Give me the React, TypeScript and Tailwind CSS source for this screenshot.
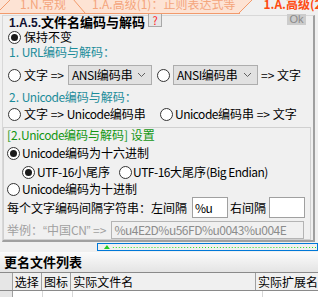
import React from "react";

const L = ({ children }: { children: React.ReactNode }) => (
  <span className="tracking-[-0.5px]">{children}</span>
);

const Radio = ({ checked }: { checked?: boolean }) => (
  <span className="w-[13px] h-[13px] rounded-full border border-[#333333] bg-white flex items-center justify-center shrink-0">
    {checked && <span className="w-[7px] h-[7px] rounded-full bg-[#1a1a1a]" />}
  </span>
);

const Select = ({ w }: { w: string }) => (
  <span className={`${w} h-[20px] bg-[#e1e1e1] border border-[#adadad] flex items-center justify-between pl-[3px] pr-[5px] shrink-0`}>
    <span><L>ANSI</L>编码串</span>
    <svg width="9" height="6" viewBox="0 0 9 6">
      <path d="M1 1 L4.5 4.5 L8 1" fill="none" stroke="#606060" strokeWidth="1" />
    </svg>
  </span>
);

export default function App() {
  return (
    <div className="w-[318px] h-[297px] bg-[#f0f0f0] overflow-hidden text-[12px] leading-[14px] text-black font-['Noto_Sans_CJK_SC','Liberation_Sans',sans-serif]">
      {/* Tabs */}
      <div className="relative h-[14px] bg-[#fde3d4] overflow-hidden">
        <svg className="absolute inset-0" width="318" height="14" viewBox="0 0 318 14">
          <polygon points="239,14 252,0 318,0 318,14" fill="#f0f0f0" />
          <line x1="-3" y1="13" x2="11" y2="-1" stroke="#f29a6c" strokeWidth="1" />
          <line x1="73" y1="-1" x2="85" y2="13" stroke="#f29a6c" strokeWidth="1" />
          <line x1="239" y1="13" x2="253" y2="-1" stroke="#f29a6c" strokeWidth="1" />
          <line x1="0" y1="13.5" x2="240" y2="13.5" stroke="#f29a6c" strokeWidth="1" />
        </svg>
        <div className="relative flex items-start -mt-[3px] leading-[14px] whitespace-nowrap">
          <span className="ml-[20px] text-[#f4a57c]">1.N.常规</span>
          <span className="ml-[26px] text-[#f4a57c]">1.A.高级(1)：正则表达式等</span>
          <span className="ml-[28px] text-[#ff4a10] font-bold">1.A.高级(2)</span>
        </div>
      </div>

      {/* Outer panel */}
      <div className="ml-[2px] mt-[1px] w-[313px] h-[227px] border-t border-l border-[#d8d8d8] border-r-2 border-r-[#a0a0a0] border-b-2 border-b-[#a0a0a0] flex flex-col">
        <div className="h-[14px] flex items-start pl-[6px] whitespace-nowrap">
          <span className="font-bold text-[13px] leading-[14px] mt-[-1px]">
            <span className="text-[12px] font-['Liberation_Sans',sans-serif] text-[#101030]">1.A.5.</span>文件名编码与解码
          </span>
          <span className="ml-[3px] mt-[-3px] w-[14px] h-[14px] bg-[#e6e6e6] border border-[#a8a8a8] flex items-center justify-center text-[#ff2020] text-[11px] leading-[12px]">?</span>
          <span className="ml-auto mr-[7px] mt-[-4px] w-[19px] h-[13px] bg-[#cccccc] flex items-center justify-center text-[#8a8a8a] text-[11px] leading-[12px] font-['Liberation_Sans',sans-serif]">Ok</span>
        </div>
        <div className="h-[14px] flex items-center pl-[5px] gap-[3px]">
          <Radio checked />
          <span>保持不变</span>
        </div>
        <div className="h-[16px] flex items-center pl-[6px] text-[#1c8c9a] whitespace-pre">
          <span>1. <L>URL</L>编码与解码：</span>
        </div>
        <div className="mt-[4px] h-[22px] flex items-center pl-[5px] whitespace-nowrap">
          <Radio />
          <span className="ml-[3px]">文字 =&gt;</span>
          <span className="ml-[4px]"><Select w="w-[84px]" /></span>
          <span className="ml-[5px]"><Radio /></span>
          <span className="ml-[3px]"><Select w="w-[85px]" /></span>
          <span className="ml-[3px]">=&gt; 文字</span>
        </div>
        <div className="h-[21px] flex items-center pl-[6px] text-[#1c8c9a] whitespace-pre">
          <span>2. <L>Unicode</L>编码与解码：</span>
        </div>
        <div className="h-[14px] flex items-center pl-[5px] whitespace-nowrap">
          <Radio />
          <span className="ml-[3px] w-[136px]">文字 =&gt; <L>Unicode</L>编码串</span>
          <Radio />
          <span className="ml-[2px]"><L>Unicode</L>编码串 =&gt; 文字</span>
        </div>

        {/* Inner group */}
        <div className="mt-[6px] w-[308px] h-[113px] border border-[#d0d0d0] flex flex-col whitespace-nowrap">
          <div className="h-[14px] flex items-center pl-[3px] text-[#139613]">
            <span>[2.<L>Unicode</L>编码与解码] 设置</span>
          </div>
          <div className="mt-[4px] h-[14px] flex items-center pl-[3px] gap-[2px]">
            <Radio checked />
            <span><L>Unicode</L>编码为十六进制</span>
          </div>
          <div className="mt-[5px] h-[14px] flex items-center pl-[18px]">
            <Radio checked />
            <span className="ml-[2px] w-[82px]"><L>UTF-16</L>小尾序</span>
            <Radio />
            <span className="ml-[1px]"><L>UTF-16</L>大尾序<L>(Big Endian)</L></span>
          </div>
          <div className="mt-[3px] h-[14px] flex items-center pl-[3px] gap-[2px]">
            <Radio />
            <span><L>Unicode</L>编码为十进制</span>
          </div>
          <div className="mt-[1px] h-[21px] flex items-center pl-[3px]">
            <span>每个文字编码间隔字符串：左间隔</span>
            <span className="ml-[5px] w-[36px] h-[21px] bg-white border border-[#a0a0a0] flex items-center pl-[2px]"><L>%u</L></span>
            <span className="ml-[2px]">右间隔</span>
            <span className="ml-[3px] w-[36px] h-[21px] bg-white border border-[#a0a0a0]" />
          </div>
          <div className="mt-[3px] h-[18px] flex items-center pl-[3px] text-[#a0a0a0]">
            <span>举例：<span className="font-['Liberation_Sans',sans-serif]">“</span>中国<L>CN</L><span className="font-['Liberation_Sans',sans-serif]">”</span> =&gt;</span>
            <span className="ml-[5px] w-[193px] h-[18px] bg-[#f0f0f0] border border-[#b4b4b4] flex items-center pl-[2px] text-[#8c8c8c]"><L>%u4E2D%u56FD%u0043%u004E</L></span>
          </div>
        </div>
      </div>

      {/* Splitter */}
      <div className="h-[10px] pt-[1px]">
        <div className="ml-[97px] h-[8px] border border-[#0078d7] flex items-center">
          <svg width="221" height="6" viewBox="0 0 221 6">
            <polygon points="6,5 9,1 12,5" fill="#22cc22" />
            <line x1="15" y1="3.5" x2="221" y2="3.5" stroke="#22dd22" strokeWidth="1" strokeDasharray="1 2" />
          </svg>
        </div>
      </div>

      {/* Header band */}
      <div className="h-[20px] bg-gradient-to-b from-[#fbfbfb] to-[#e4e4e4] flex items-center pl-[4px] font-bold text-[13px]">更名文件列表</div>

      {/* Table header */}
      <div className="h-[19px] border-t border-b border-[#8a8a8a] flex bg-[#f0f0f0] whitespace-nowrap">
        <div className="w-[13px] border-r border-[#a0a0a0] bg-[#e6e6e6]" />
        <div className="w-[30px] border-r border-[#a0a0a0] pl-[2px] flex items-center">选择</div>
        <div className="w-[30px] border-r border-[#a0a0a0] pl-[2px] flex items-center">图标</div>
        <div className="w-[190px] border-r border-[#a0a0a0] pl-[2px] flex items-center">实际文件名</div>
        <div className="flex-1 pl-[2px] flex items-center">实际扩展名</div>
      </div>
      <div className="h-[10px] flex bg-white">
        <div className="w-[13px] border-r border-[#a0a0a0] bg-[#e6e6e6]" />
        <div className="w-[30px] border-r border-[#d8d8d8]" />
        <div className="w-[30px] border-r border-[#d8d8d8]" />
        <div className="w-[190px] border-r border-[#d8d8d8]" />
        <div className="flex-1" />
      </div>
    </div>
  );
}
